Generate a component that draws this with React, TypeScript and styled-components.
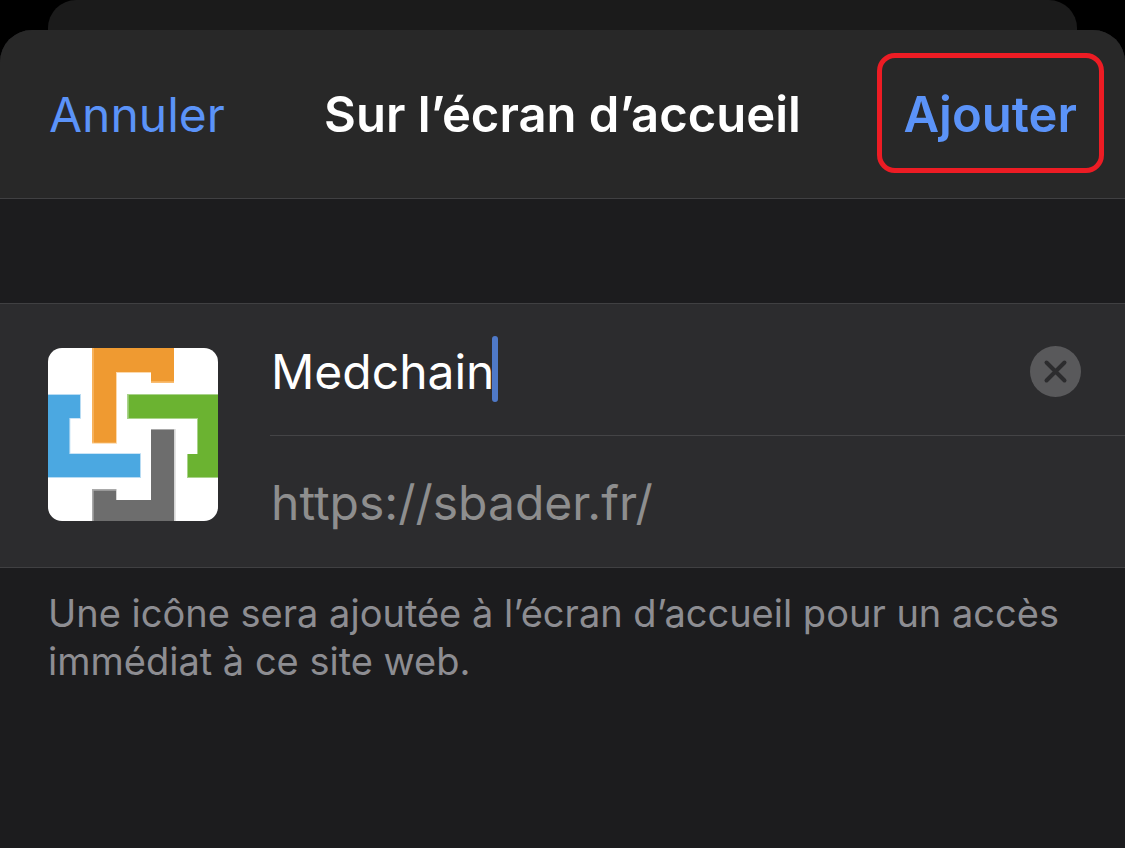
import React, { useState } from "react";
import styled, { createGlobalStyle } from "styled-components";

const GlobalStyle = createGlobalStyle`
  *, *::before, *::after { box-sizing: border-box; }
  body {
    margin: 0;
    background: #000;
    color: #fff;
    font-family: Inter, "Liberation Sans", sans-serif;
  }
  button, input {
    font: inherit;
    border: 0;
    margin: 0;
    padding: 0;
    background: none;
  }
`;

const Screen = styled.div`
  display: flex;
  flex-direction: column;
  min-height: 100vh;
`;

const SheetBehind = styled.div`
  height: 30px;
  margin: 0 48px;
  border-radius: 28px 28px 0 0;
  background: #1b1b1b;
`;

const Sheet = styled.main`
  flex: 1;
  border-radius: 32px 32px 0 0;
  overflow: hidden;
  background: #1c1c1e;
`;

const Header = styled.header`
  display: grid;
  grid-template-columns: 1fr auto 1fr;
  align-items: center;
  height: 169px;
  padding: 0 21px 2px;
  border-bottom: 1px solid #404042;
  background: #282828;
`;

const Title = styled.h1`
  margin: 0;
  padding-top: 4px;
  font-size: 49px;
  line-height: 60px;
  font-weight: 600;
  white-space: nowrap;
`;

const HeaderButton = styled.button`
  justify-self: start;
  padding: 4px 0 0 28px;
  color: #5b93f8;
  font-size: 48px;
  line-height: 60px;
`;

const PrimaryButton = styled(HeaderButton)`
  justify-self: end;
  height: 120px;
  padding: 4px 22px 0 21px;
  border: 5px solid #ed1c24;
  border-radius: 18px;
  font-size: 49px;
  font-weight: 600;
`;

const Card = styled.section`
  display: flex;
  align-items: center;
  margin-top: 104px;
  padding-left: 48px;
  border: solid #404042;
  border-width: 1px 0;
  background: #2c2c2e;
`;

const Logo = styled.svg`
  flex: none;
  width: 170px;
  height: 173px;
  margin-bottom: 2px;
  border-radius: 14px;
  background: #fff;
`;

const Fields = styled.div`
  flex: 1;
  min-width: 0;
  margin-left: 52px;
`;

const Row = styled.div<{ $divided?: boolean }>`
  display: flex;
  align-items: center;
  height: ${(p) => (p.$divided ? 132 : 131)}px;
  padding: 3px 44px 0 1px;
  border-bottom: ${(p) => (p.$divided ? "1px solid #444446" : "0")};
  font-size: 48px;
  line-height: 60px;
`;

const NameInput = styled.input`
  field-sizing: content;
  height: 66px;
  color: #fff;
  caret-color: transparent;
  outline: none;
`;

const Caret = styled.span`
  width: 6px;
  height: 66px;
  margin: 0 0 4px -2px;
  border-radius: 3px;
  background: #4f79c8;
`;

const ClearButton = styled.button`
  flex: none;
  width: 51px;
  height: 51px;
  margin-left: auto;
  svg { display: block; }
`;

const Address = styled.span`
  color: #8e8e8e;
`;

const Note = styled.p`
  margin: 0;
  padding: 21px 48px;
  color: #8d8d92;
  font-size: 38px;
  line-height: 48px;
`;

function AppLogo() {
  return (
    <Logo viewBox="0 0 510 519" preserveAspectRatio="none" role="img" aria-label="Medchain">
      <path fill="#fcd9ac" d="M132 0H378V105H309V75H207V287H132Z" />
      <path fill="#f7b25c" d="M132 0H138V284H132ZM309 99H378V104H309Z" />
      <path fill="#ef9a31" d="M138 0H378V99H309V72H204V284H138Z" />
      <path fill="#b9dcf3" d="M0 138H99V212H67V316H279V390H0Z" />
      <path fill="#4ba8e1" d="M0 141H96V210H64V318H276V387H0Z" />
      <path fill="#a9d38a" d="M237 138H510V390H417V318H447V213H237Z" />
      <path fill="#6bb331" d="M242 141H510V387H420V318H450V210H242Z" />
      <path fill="#d6d6d6" d="M309 243H383V519H132V423H207V456H309Z" />
      <path fill="#a9a9a9" d="M309 243H378V250H309ZM132 423H204V430H138V519H132Z" />
      <path fill="#6d6d6d" d="M309 246H378V519H137V428H204V456H309Z" />
    </Logo>
  );
}

export default function App() {
  const [name, setName] = useState("Medchain");
  return (
    <>
      <GlobalStyle />
      <Screen>
        <SheetBehind />
        <Sheet>
          <Header>
            <HeaderButton type="button">Annuler</HeaderButton>
            <Title>Sur l’écran d’accueil</Title>
            <PrimaryButton type="button">Ajouter</PrimaryButton>
          </Header>
          <Card>
            <AppLogo />
            <Fields>
              <Row $divided>
                <NameInput
                  aria-label="Nom"
                  value={name}
                  onChange={(e) => setName(e.target.value)}
                />
                <Caret />
                <ClearButton type="button" aria-label="Effacer" onClick={() => setName("")}>
                  <svg width="51" height="51" viewBox="0 0 51 51">
                    <circle cx="25.5" cy="25.5" r="25.5" fill="#59595b" />
                    <path
                      d="M16.5 16.5L34.5 34.5M34.5 16.5L16.5 34.5"
                      stroke="#2c2c2e"
                      strokeWidth="4"
                      strokeLinecap="round"
                    />
                  </svg>
                </ClearButton>
              </Row>
              <Row>
                <Address>https://sbader.fr/</Address>
              </Row>
            </Fields>
          </Card>
          <Note>
            Une icône sera ajoutée à l’écran d’accueil pour un accès immédiat à ce site web.
          </Note>
        </Sheet>
      </Screen>
    </>
  );
}
